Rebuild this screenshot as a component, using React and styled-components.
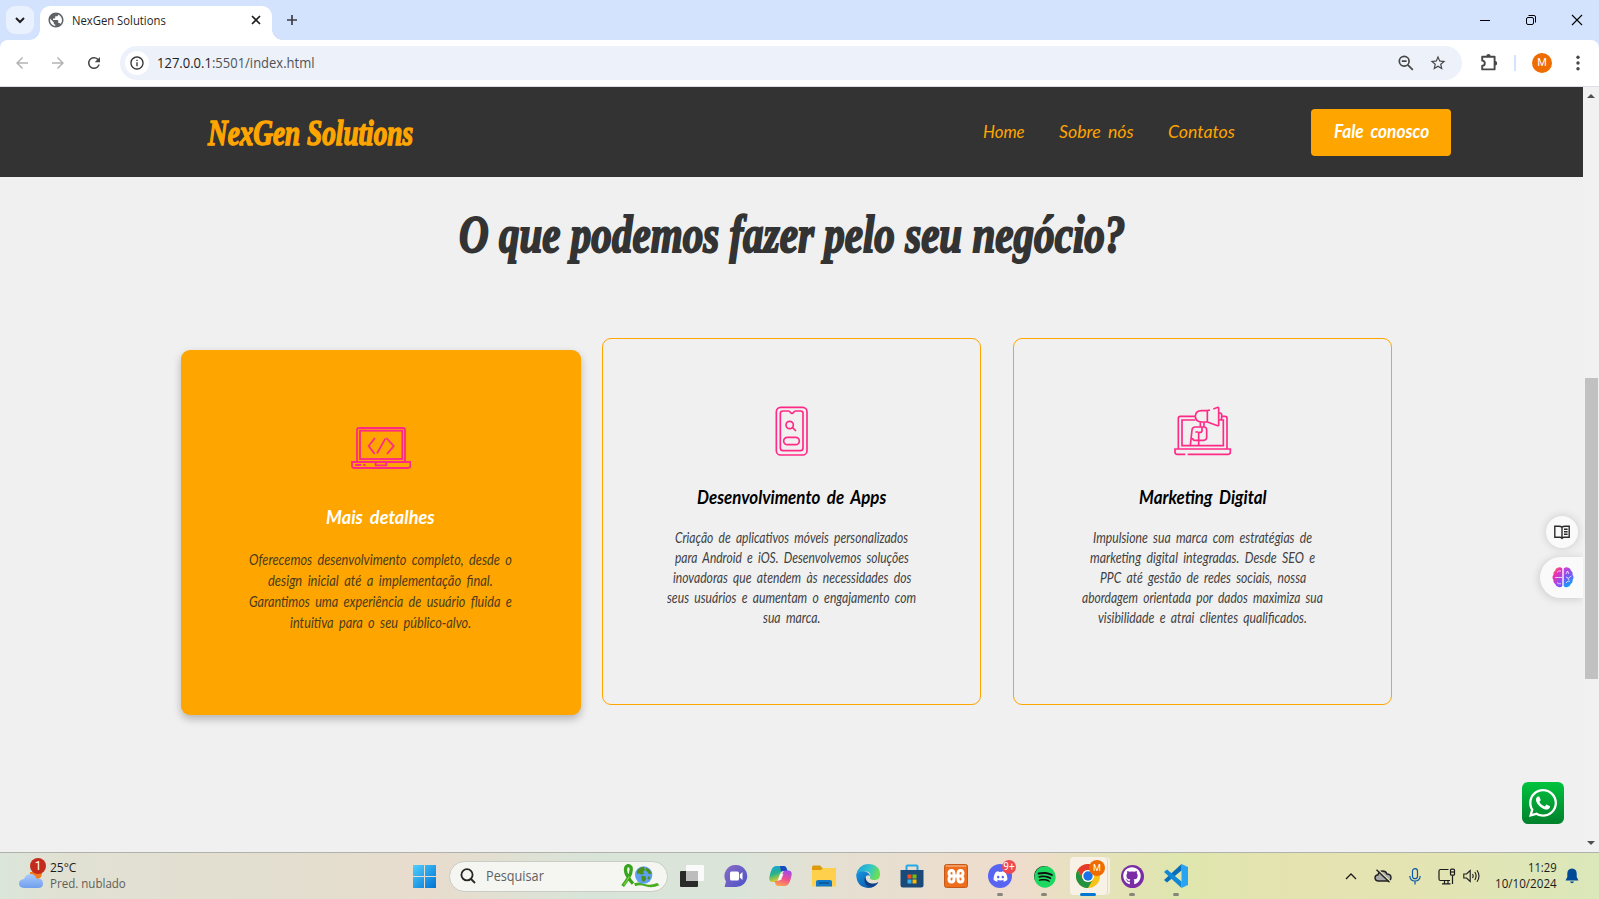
import React, { useLayoutEffect, useRef } from 'react';
import styled, { createGlobalStyle } from 'styled-components';
import { MdArrowBack, MdArrowForward, MdRefresh, MdInfoOutline, MdStarBorder, MdPublic } from 'react-icons/md';
import { FaDiscord, FaSpotify, FaGithub, FaWhatsapp } from 'react-icons/fa';

const ui = `'Open Sans', 'Noto Sans', sans-serif`;
const hand = `Lato, 'Open Sans', sans-serif`;
const display = `'Liberation Serif', serif`;

const Global = createGlobalStyle`
  * { box-sizing: border-box; }
  body { margin: 0; overflow: hidden; background: #f0f0f0; font-family: ${ui}; font-variant-ligatures: none; }
  svg { display: block; flex: none; }
  h1, h2, h3, p { margin: 0; font-weight: inherit; }
`;

/* A single line condensed or widened to a set measure. */
const FitBox = styled.span`
  display: block;
  flex: none;
  width: ${(p) => p.$w}px;
  white-space: nowrap;
`;
const FitInner = styled.span`
  display: inline-block;
  transform-origin: 0 50%;
`;
function Fit({ w, children }) {
  const ref = useRef(null);
  useLayoutEffect(() => {
    ref.current.style.transform = `scaleX(${w / ref.current.offsetWidth})`;
  }, [w, children]);
  return (
    <FitBox $w={w}>
      <FitInner ref={ref}>{children}</FitInner>
    </FitBox>
  );
}

const Screen = styled.div`
  width: 1599px;
  height: 899px;
  display: flex;
  flex-direction: column;
  overflow: hidden;
`;

/* ---------- browser ---------- */
const TabStrip = styled.div`
  height: 40px;
  background: #d3e3fd;
  display: flex;
  padding: 6px 0 0 6px;
`;
const TabSearch = styled.div`
  width: 28px;
  height: 28px;
  border-radius: 9px;
  background: #e9f0fe;
  display: grid;
  place-items: center;
`;
const Tab = styled.div`
  position: relative;
  width: 232px;
  height: 34px;
  margin-left: 6px;
  padding: 0 10px 6px 7px;
  border-radius: 10px 10px 0 0;
  background: #fff;
  display: flex;
  align-items: center;
  color: #1f1f1f;
  font-size: 12px;
  line-height: 28px;
  &::before, &::after {
    content: '';
    position: absolute;
    bottom: 0;
    width: 10px;
    height: 10px;
  }
  &::before { left: -10px; background: radial-gradient(circle at 0 0, transparent 9.5px, #fff 10px); }
  &::after { right: -10px; background: radial-gradient(circle at 100% 0, transparent 9.5px, #fff 10px); }
`;
const TabTitle = styled.div`
  flex: 1;
  margin: 2px 0 0 7px;
`;
const NewTab = styled.div`
  margin: 8px 0 0 14px;
`;
const WindowButtons = styled.div`
  margin: 8px 16px 0 auto;
  display: flex;
  gap: 34px;
`;
const Toolbar = styled.div`
  height: 47px;
  background: #fff;
  border-bottom: 1px solid #dcdfe4;
  border-radius: 8px 8px 0 0;
  display: flex;
  align-items: center;
  padding-left: 13px;
  color: #474747;
`;
const ToolbarBack = styled.div`
  background: #d3e3fd;
`;
const NavIcon = styled.div`
  width: 18px;
  margin-right: 18px;
  color: ${(p) => (p.$off ? '#b4b4b4' : '#474747')};
`;
const Omnibox = styled.div`
  width: 1342px;
  height: 34px;
  margin: 0 17px 0 -1px;
  border-radius: 17px;
  background: #ecf1fa;
  display: flex;
  align-items: center;
  padding: 0 15px 0 5px;
  color: #1f1f1f;
  font-size: 14px;
  line-height: 20px;
`;
const InfoDot = styled.div`
  width: 24px;
  height: 24px;
  border-radius: 50%;
  background: #fff;
  display: grid;
  place-items: center;
  margin-right: 8px;
  color: #333;
`;
const UrlRest = styled.span`
  color: #505356;
`;
const OmniActions = styled.div`
  margin-left: auto;
  display: flex;
  gap: 14px;
  align-items: center;
  color: #474747;
`;
const Divider = styled.div`
  width: 2px;
  height: 16px;
  background: #d3e3fd;
  margin: 0 16px 0 15px;
`;
const Avatar = styled.div`
  width: 20px;
  height: 20px;
  margin-right: 24px;
  border-radius: 50%;
  background: #ef6c00;
  color: #fff;
  font: 11px/20px Roboto, sans-serif;
  text-align: center;
`;

/* ---------- page ---------- */
const Viewport = styled.div`
  height: 765px;
  display: flex;
  background: #f0f0f0;
`;
const Page = styled.div`
  position: relative;
  width: 1583px;
`;
const Header = styled.header`
  height: 90px;
  background: #333;
  display: flex;
  padding: 0 132px 0 208px;
`;
const Logo = styled.h1`
  margin-top: 26px;
  color: #ffa500;
  font: italic bold 36px/40px ${display};
  -webkit-text-stroke: 1.5px #ffa500;
`;
const Nav = styled.nav`
  margin: 33px 0 0 auto;
  display: flex;
  gap: 34px;
  color: #ffa500;
  font: italic 18px/22px ${hand};
  word-spacing: 3px;
`;
const Contact = styled.div`
  width: 140px;
  height: 47px;
  margin: 22px 0 0 76px;
  padding: 11px 0 0 23px;
  border-radius: 4px;
  background: #ffa500;
  color: #fff;
  font: italic bold 18px/22px ${hand};
  word-spacing: 3px;
`;
const Heading = styled.h2`
  margin: 28px 0 0 459px;
  color: #333;
  font: italic bold 52px/60px ${display};
  -webkit-text-stroke: 2px #333;
`;
const Cards = styled.div`
  margin: 73px 0 0 181px;
  display: flex;
  align-items: flex-start;
`;
const Card = styled.article`
  display: flex;
  flex-direction: column;
  align-items: center;
  width: ${(p) => (p.$active ? 399.5 : 379)}px;
  height: ${(p) => (p.$active ? 365.5 : 367)}px;
  margin: ${(p) => (p.$active ? '11.5px 21.5px 0 0' : '0 32px 0 0')};
  padding-top: ${(p) => (p.$active ? 76 : 67)}px;
  border-radius: 9px;
  border: ${(p) => (p.$active ? 'none' : '1px solid #ffa500')};
  background: ${(p) => (p.$active ? '#ffa500' : 'transparent')};
  box-shadow: ${(p) => (p.$active ? '0 4px 8px rgba(0,0,0,.25)' : 'none')};
`;
const CardTitle = styled.h3`
  margin: ${(p) => (p.$active ? '35px 0 20px' : '30px 0 19px')};
  color: ${(p) => (p.$active ? '#fff' : '#000')};
  font: italic bold ${(p) => (p.$active ? '19px/23px' : '18px/22px')} ${hand};
  word-spacing: 3px;
`;
const CardText = styled.p`
  display: flex;
  flex-direction: column;
  align-items: center;
  color: ${(p) => (p.$active ? '#4a3c1c' : '#404040')};
  font: italic ${(p) => (p.$active ? '16px/21px' : '15px/20px')} ${hand};
  word-spacing: 3px;
`;
const Scrollbar = styled.div`
  width: 16px;
  display: flex;
  flex-direction: column;
  align-items: center;
  background: #f1f1f1;
`;
const Arrow = styled.div`
  width: 8px;
  height: 4px;
  background: #505050;
  clip-path: ${(p) => (p.$down ? 'polygon(0 0, 100% 0, 50% 100%)' : 'polygon(50% 0, 100% 100%, 0 100%)')};
  margin: ${(p) => (p.$down ? 'auto 0 7px' : '7px 0 0')};
`;
const Thumb = styled.div`
  width: 13px;
  height: 301px;
  margin-top: 280px;
  background: #c1c1c1;
`;
const ReaderButton = styled.div`
  position: absolute;
  left: 1546px;
  top: 429px;
  width: 32px;
  height: 32px;
  border-radius: 50%;
  background: #fafafa;
  box-shadow: 0 0 10px rgba(0,0,0,.16);
  display: grid;
  place-items: center;
`;
const AssistantButton = styled.div`
  position: absolute;
  left: 1540px;
  top: 470px;
  width: 43px;
  height: 41px;
  border-radius: 21px 0 0 21px;
  background: #fafafa;
  box-shadow: -1px 1px 9px rgba(0,0,0,.16);
  clip-path: inset(-20px 0 -20px -20px);
  padding: 10px 0 0 12px;
`;
const WhatsApp = styled.div`
  position: absolute;
  left: 1522px;
  top: 695px;
  width: 42px;
  height: 42px;
  border-radius: 6px;
  background: linear-gradient(#00c33e, #00802c);
  color: #fff;
  display: grid;
  place-items: center;
`;

/* ---------- taskbar ---------- */
const Taskbar = styled.div`
  height: 47px;
  border-top: 1px solid #b0b3ab;
  background: linear-gradient(90deg, #dbe5da 0, #e1e1d3 60px, #e3decf 300px, #e8dccd 430px, #d9e4d9 590px, #dbe4d9 740px,
    #e6dfd1 850px, #eedccc 1020px, #e5e2b9 1105px, #dfe6ae 1180px, #e5e3b0 1300px, #e3e4b4 1450px, #dbe8ba 1599px);
  display: flex;
  align-items: center;
`;
const Weather = styled.div`
  width: 394px;
  display: flex;
  gap: 5px;
  padding-left: 18px;
  font-size: 12px;
  line-height: 16px;
  color: #1b1b1b;
`;
const Muted = styled.div`
  color: #5d5e59;
`;
const WeatherIcon = styled.div`
  position: relative;
  width: 27px;
  height: 32px;
  padding: 12px 0 0 1px;
`;
const Badge = styled.div`
  position: absolute;
  top: ${(p) => p.$top}px;
  left: ${(p) => p.$left}px;
  width: ${(p) => p.$size}px;
  height: ${(p) => p.$size}px;
  border-radius: 50%;
  background: ${(p) => p.$bg};
  color: #fff;
  text-align: center;
  font-family: Roboto, sans-serif;
  font-size: ${(p) => p.$font}px;
  line-height: ${(p) => p.$size}px;
`;
const Slot = styled.div`
  position: relative;
  width: 44px;
  height: 46px;
  display: grid;
  place-items: center;
`;
const StartSlot = styled(Slot)`
  width: 56px;
  padding-left: 5px;
`;
const Search = styled.div`
  width: 219px;
  height: 31px;
  margin: 0 2px 0 -1px;
  border-radius: 16px;
  border: 1px solid #c9cdc4;
  background: #f5f6f2;
  display: flex;
  align-items: center;
  padding: 0 7px 0 10px;
  font-size: 14px;
  line-height: 20px;
  color: #616161;
  gap: 10px;
`;
const SearchArt = styled.div`
  margin-left: auto;
`;
const Running = styled.div`
  position: absolute;
  bottom: 3px;
  left: ${(p) => (p.$active ? 14 : 19)}px;
  width: ${(p) => (p.$active ? 16 : 6)}px;
  height: 3px;
  border-radius: 2px;
  background: ${(p) => (p.$active ? '#0078d4' : '#85857a')};
`;
const ActiveTile = styled.div`
  width: 37px;
  height: 38px;
  border-radius: 4px;
  background: #f7f1e6;
  box-shadow: 1px 0 0 #e2d9c8, 3px 0 0 #f4efdf;
  display: grid;
  place-items: center;
`;
const Disc = styled.div`
  width: ${(p) => p.$size}px;
  height: ${(p) => p.$size}px;
  border-radius: 50%;
  background: ${(p) => p.$bg};
  color: #fff;
  display: grid;
  place-items: center;
`;
const Tray = styled.div`
  margin-left: auto;
  display: flex;
  align-items: center;
  padding-right: 20px;
`;
const TrayItem = styled.div`
  width: ${(p) => p.$w}px;
  display: grid;
  place-items: center;
`;
const Clock = styled.div`
  width: 77px;
  display: flex;
  flex-direction: column;
  align-items: flex-end;
  margin-right: 8px;
  color: #1b1b1b;
  font-size: 12px;
  line-height: 16px;
`;

/* ---------- drawings ---------- */
const pink = '#ff2a86';

const LaptopCode = () => (
  <svg width="60" height="44" viewBox="513 255 180 132" fill="none" stroke={pink} strokeWidth="5.5">
    <path d="M531 361V267q0-6 6-6h132q6 0 6 6v94" />
    <rect x="540" y="269" width="127" height="85" />
    <path d="M516 363h175v11q0 7-8 7H524q-8 0-8-7zM587 363v10h32v-10M526 372h18M550 372h7" />
    <path d="M585 291l-19 24 18 24M619 291l22 24-20 24M616 293l-25 44" />
  </svg>
);
const PhoneSearch = () => (
  <svg width="60" height="50" viewBox="486 228 180 150" fill="none" stroke={pink} strokeWidth="5">
    <rect x="529" y="232" width="92" height="143" rx="13" />
    <path d="M549 243h16q4 0 6 4 5 7 10 0 2-4 6-4h15q7 0 7 7v104q0 8-8 8h-52q-8 0-8-8V250q0-7 8-7z" />
    <circle cx="569" cy="285" r="11" />
    <path d="M577 292l11 11" />
    <rect x="551" y="322" width="47" height="22" rx="11" />
  </svg>
);
const Megaphone = () => (
  <svg width="60" height="50" viewBox="519 228 180 150" fill="none" stroke={pink} strokeWidth="5">
    <path d="M535 356V265q0-6 6-6h44M666 259h9q6 0 6 6v91" />
    <path d="M586 270h-40v77h124v-77h-7" />
    <path d="M556 373h-24q-7 0-7-7v-9h166v9q0 7-7 7H563" />
    <path d="M622 242h-17q-19 0-19 17t19 17h17zM622 242l8-2M640 237l14-5q2 0 2 3v50q0 3-3 2l-31-11M657 249h3q5 0 5 5v11q0 5-5 5h-3" />
    <path d="M601 277v12M612 277v12M571 346l5-46q1-9 10-9h26q8 0 8 9v22q0 9-9 9h-27q-6 0-6-7M595 306h-9M596 306v40M606 292v11q0 5-10 5" />
  </svg>
);
const ZoomOut = () => (
  <svg width="18" height="18" viewBox="0 0 18 18" fill="none" stroke="#474747" strokeWidth="1.7">
    <circle cx="7.2" cy="7.2" r="4.9" />
    <path d="M10.8 10.8l5 5M4.800 7.200h4.800" />
  </svg>
);
const Puzzle = () => (
  <svg width="20" height="20" viewBox="0 0 20 20">
    <path d="M3.2 3.8h12.4v12.6H3.2v-3.6a2.3 2.3 0 0 0 0-5.2z" fill="none" stroke="#474747" strokeWidth="1.9" strokeLinejoin="round" />
    <path d="M7.3 3.2a2.2 2.2 0 0 1 4.4 0zM16 8a2.2 2.2 0 0 1 0 4.4z" fill="#474747" />
  </svg>
);
const Dots = () => (
  <svg width="4" height="16" viewBox="0 0 4 16" fill="#474747">
    <circle cx="2" cy="2.3" r="1.7" /><circle cx="2" cy="8" r="1.7" /><circle cx="2" cy="13.7" r="1.7" />
  </svg>
);
const Book = () => (
  <svg width="16" height="15" viewBox="0 0 16 15" fill="none" stroke="#2b2b2b" strokeWidth="1.4">
    <path d="M8 2.3Q7 1.3 5 1.3H.8v10.9h5q1.5 0 2.2 1 .7-1 2.2-1h5V1.3H11q-2 0-3 1zM8 2v12M10 4.2h3.6M10 6.7h3.6M10 9.2h3.6" />
  </svg>
);
const Brain = () => (
  <svg width="22" height="21" viewBox="0 0 22 21">
    <defs>
      <linearGradient id="brainL" x1="0" y1="0" x2=".6" y2="1">
        <stop offset="0" stopColor="#ff9b21" /><stop offset=".4" stopColor="#ee2fb5" /><stop offset="1" stopColor="#7a55ff" />
      </linearGradient>
      <linearGradient id="brainR" x1="0" y1="0" x2=".3" y2="1">
        <stop offset="0" stopColor="#d73fd0" /><stop offset=".55" stopColor="#7357f6" /><stop offset="1" stopColor="#12a1ff" />
      </linearGradient>
    </defs>
    <path d="M10.3 1.5Q8-.5 5.5.8 3.4 1.3 3 3.7.8 5 1.6 7.6-.6 10.400 1.500 13q-.5 3 1.700 4Q4 19.800 6.500 20q2.500.8 3.800-1z" fill="url(#brainL)" />
    <path d="M11.700 1.500Q14-.5 16.500.8q2.100.5 2.500 2.900 2.200 1.300 1.400 3.900 2.200 2.800.1 5.400.5 3-1.700 4-.8 2.800-3.300 3-2.500.8-3.800-1z" fill="url(#brainR)" />
    <path d="M3 10.500h7M5 5.500q1-2 4-1.500M5 15.500q1 1.700 4 1.300M14 7l1.500-3L17 7M14 10l2 1 1 2M19.500 9l-3 2M14 16l2-2 2 .3" stroke="#fff" strokeWidth=".9" fill="none" opacity=".8" />
  </svg>
);
const Cloud = () => (
  <svg width="26" height="20" viewBox="0 0 26 20">
    <defs>
      <linearGradient id="cloud" x1="0" y1="0" x2="0" y2="1">
        <stop offset="0" stopColor="#a9caff" /><stop offset="1" stopColor="#6f9fec" />
      </linearGradient>
    </defs>
    <circle cx="17" cy="1.500" r="6" fill="#f47b1c" />
    <path d="M5 16q-5-.5-5-4.500T5 7q2-5 7-5 4 0 5.500 4.500Q24 6 24 11.500q0 4.500-5 4.500z" fill="url(#cloud)" />
  </svg>
);
const WindowsLogo = () => (
  <svg width="23" height="23" viewBox="0 0 23 23">
    <defs>
      <linearGradient id="win" x1="0" y1="0" x2="1" y2="1">
        <stop offset="0" stopColor="#4fd0ff" /><stop offset="1" stopColor="#0072d3" />
      </linearGradient>
    </defs>
    <path d="M0 0h11v11H0zM12 0h11v11H12zM0 12h11v11H0zM12 12h11v11H12z" fill="url(#win)" />
  </svg>
);
const Lens = () => (
  <svg width="16" height="16" viewBox="0 0 16 16" fill="none" stroke="#262626" strokeWidth="1.8">
    <circle cx="7" cy="6.800" r="5.600" /><path d="M11 11l4 4" />
  </svg>
);
const RibbonEarth = () => (
  <svg width="40" height="24" viewBox="660 43 120 72">
    <path d="M668 109q8-10 18-26 10-17 7-30-8-10-15-1-5 14 6 30 8 13 15 20" fill="none" stroke="#38a31c" strokeWidth="10" />
    <path d="M671 106q9-11 17-26" fill="none" stroke="#74cf35" strokeWidth="4" />
    <path d="M702 101q18-6 32 2 16 6 38-3l6 7q-22 10-42 3-17-6-30 0z" fill="#48ac1d" />
    <circle cx="731" cy="76" r="26" fill="#5f9ff0" />
    <path d="M710 66q8-16 22-14l3 10-6 4 4 6-10 3-4-4-6 3zM738 54q14 4 17 18l-8 2-5-8-5-3zM724 78l12 2 3 8-8 10-6-6zM745 80l6 2-3 8-5-3z" fill="#4b8f1d" />
  </svg>
);
const TaskView = () => (
  <svg width="24" height="22" viewBox="0 0 24 22">
    <rect x="6" y="0" width="18" height="16" rx="1" fill="#fafafa" />
    <rect x="0" y="6" width="18" height="16" rx="1" fill="#2a2a2a" />
    <rect x="6" y="6" width="12" height="10" fill="#bdbdbd" />
  </svg>
);
const Chat = () => (
  <svg width="24" height="24" viewBox="0 0 24 24">
    <defs>
      <linearGradient id="chat" x1="0" y1="0" x2="1" y2="1">
        <stop offset="0" stopColor="#8a6cc4" /><stop offset="1" stopColor="#4b52c9" />
      </linearGradient>
    </defs>
    <path d="M12.500 1A11 11 0 1 1 12 23H1.500q-1 0-.7-1L2 17.500A11 11 0 0 1 12.500 1z" fill="url(#chat)" />
    <rect x="6" y="7.500" width="9" height="9" rx="1.500" fill="#fff" />
    <path d="M15.800 10.500L18.500 8v8l-2.700-2.500z" fill="#fff" />
  </svg>
);
const Copilot = () => (
  <svg width="23" height="22" viewBox="0 0 23 22">
    <defs>
      <linearGradient id="copA" x1="0" y1="0" x2=".4" y2="1">
        <stop offset="0" stopColor="#16a3e6" /><stop offset=".5" stopColor="#27b18d" /><stop offset="1" stopColor="#f5d21c" />
      </linearGradient>
      <linearGradient id="copB" x1=".6" y1="0" x2=".3" y2="1">
        <stop offset="0" stopColor="#a34be8" /><stop offset=".5" stopColor="#ef4f8e" /><stop offset="1" stopColor="#ffa24d" />
      </linearGradient>
    </defs>
    <path d="M7 1h8q2 0 2.700 2.500L18.500 6H14q-2 0-2.700 2.300L9 15q-.6 2-2.500 2H4q-4 0-3.700-4Q1.500 6 3.500 3 5 1 7 1z" fill="url(#copA)" />
    <path d="M11 1h4q2 0 2.700 2.500L18.500 6H14q-1.500 0-2 1z" fill="#1b49c2" />
    <path d="M16 21H9q-2 0-2.700-2.500L5.500 16H9q2 0 2.700-2.300L14 7.500Q14.600 5.500 16.500 5.500H19q4 0 3.700 4-1.200 6.500-3.200 9.500-1.300 2-3.500 2z" fill="url(#copB)" />
    <path d="M11 9h3.500l-2.300 6H9z" fill="#fff" opacity=".75" />
  </svg>
);
const Folder = () => (
  <svg width="24" height="22" viewBox="0 0 24 22">
    <path d="M0 2q0-1.500 1.500-1.500H8L10.500 3H24v6H0z" fill="#dc9a0c" />
    <path d="M0 5h9l2-2h12q1 0 1 1v16q0 1.500-1.500 1.500h-21Q0 21.500 0 20z" fill="#ffd04b" />
    <path d="M4 21.500v-4.500q0-2 2-2h12q2 0 2 2v4.500z" fill="#1279c9" /><path d="M7 18h10" stroke="#0a5292" strokeWidth="1.500" />
  </svg>
);
const Edge = () => (
  <svg width="24" height="24" viewBox="0 0 24 24">
    <defs>
      <linearGradient id="edgeA" x1="0" y1="0" x2="1" y2=".3">
        <stop offset="0" stopColor="#199bde" /><stop offset=".6" stopColor="#34c6c9" /><stop offset="1" stopColor="#6bde58" />
      </linearGradient>
      <linearGradient id="edgeB" x1="0" y1="0" x2="1" y2="1">
        <stop offset="0" stopColor="#1797e2" /><stop offset="1" stopColor="#0c4a9b" />
      </linearGradient>
    </defs>
    <path d="M.3 11A12 12 0 0 1 12 0q12 .5 12 10.500 0 5.500-6 5.500-4 0-4-2.500Q15.500 8 10 7.500 3 7 .3 11z" fill="url(#edgeA)" />
    <path d="M.2 10.500Q3.500 6.500 9 7.500q4.500 1 5 4.500-2.500-2-4.500 1-1 7 6 7.500 4 .2 7-2.500Q19 24 12 24 .5 23 .2 10.500z" fill="url(#edgeB)" />
    <path d="M9.500 12.500q-3 6.500 3 10 5 2 10-4.500-3 2-7 1.500-6-1-6-7z" fill="#123f83" />
  </svg>
);
const Store = () => (
  <svg width="24" height="24" viewBox="0 0 24 24">
    <path d="M6.500 7V2.500q0-1 1-1h9q1 0 1 1V7" fill="none" stroke="#21a9e8" strokeWidth="2" />
    <path d="M.5 6h23v15q0 2.500-2.500 2.500H3Q.5 23.500.5 21z" fill="#1b4a78" />
    <path d="M7.500 10.500h4v4h-4z" fill="#f25022" /><path d="M12.500 10.500h4v4h-4z" fill="#7fba00" />
    <path d="M7.500 15.500h4v4h-4z" fill="#35b1f2" /><path d="M12.500 15.500h4v4h-4z" fill="#ffb900" />
  </svg>
);
const Xampp = () => (
  <svg width="24" height="24" viewBox="0 0 24 24">
    <rect x=".5" y=".5" width="23" height="23" rx="2" fill="#ee6d1d" stroke="#c65a1b" />
    <path d="M2 2h20" stroke="#f6a775" strokeWidth="1.500" />
    <path d="M12 12H7.500Q5 12 5 9.300T7.500 6.500 10 9.500V15q0 3-2.500 3T5 15.300 7.500 12M12 12h4.500Q19 12 19 9.300t-2.500-2.800T14 9.500V15q0 3 2.500 3t2.500-2.700T16.500 12" fill="none" stroke="#fff" strokeWidth="3" />
  </svg>
);
const Chrome = () => (
  <svg width="24" height="24" viewBox="0 0 24 24">
    <circle cx="12" cy="12" r="12" fill="#fbc116" />
    <path d="M1.600 6A12 12 0 0 1 22.400 6H12a6 6 0 0 0-5.200 9z" fill="#e33b2e" />
    <path d="M1.600 6A12 12 0 0 0 12 24l5.200-9A6 6 0 0 1 6.800 15z" fill="#229342" />
    <circle cx="12" cy="12" r="6" fill="#fff" /><circle cx="12" cy="12" r="4.700" fill="#1a73e8" />
  </svg>
);
const Code = () => (
  <svg width="24" height="24" viewBox="0 0 24 24">
    <path d="M17.500 0L24 3v18l-6.500 3z" fill="#27a5f2" />
    <path d="M17.500 0v6.500L3 18.500 0 16z" fill="#0a6fb8" />
    <path d="M17.500 24v-6.500L3 5.500 0 8z" fill="#1289d6" />
  </svg>
);
const CloudOff = () => (
  <svg width="18" height="14" viewBox="0 0 18 14">
    <path d="M4 12q-3-.2-3-3.200 0-2.500 3-3Q5 2 8.500 2T13 5q4 .3 4 3.500T13.500 12z" fill="#aaa" stroke="#222" strokeWidth="1.400" />
    <path d="M3.500 0l13 12.500" stroke="#e5e4b4" strokeWidth="1.500" /><path d="M2.500.8l13 12.500" stroke="#222" strokeWidth="1.400" />
  </svg>
);
const Mic = () => (
  <svg width="12" height="17" viewBox="0 0 12 17" fill="none" stroke="#0a59a8" strokeWidth="1.200">
    <rect x="3.500" y=".7" width="5" height="10" rx="2.500" /><path d="M.8 8q.3 5 5.200 5t5.200-5M6 13v3.500" />
  </svg>
);
const Monitor = () => (
  <svg width="18" height="17" viewBox="0 0 18 17" fill="none" stroke="#1b1b1b" strokeWidth="1.200">
    <path d="M10.500 1.500H2.500q-1.500 0-1.500 1.500v8q0 1.500 1.500 1.500H12M4 15.800h8.500M6.500 12.500v3M10 12.500v3M14.500 7.500v8.500" />
    <rect x="12.500" y="1.200" width="4" height="6" rx="1" /><path d="M12.500 4h4" />
  </svg>
);
const Volume = () => (
  <svg width="17" height="14" viewBox="0 0 17 14" fill="none" stroke="#1b1b1b" strokeWidth="1.100">
    <path d="M.8 5h2.700l3.700-3.500v11L3.500 9H.8zM9.500 5q1.300 2 0 4M11.800 3q2.600 4 0 8M14 1.200q4 5.800 0 11.600" />
  </svg>
);
const Bell = () => (
  <svg width="14" height="16" viewBox="0 0 14 16" fill="#004a98">
    <path d="M7 .5q4.700.3 4.700 5V9l1.800 3.500H.5L2.300 9V5.500q0-4.700 4.700-5zM5 13.500h4q-.5 1.700-2 1.700t-2-1.700z" />
  </svg>
);

/* ---------- content ---------- */
const cards = [
  {
    active: true,
    icon: <LaptopCode />,
    title: ['Mais detalhes', 109],
    lines: [
      ['Oferecemos desenvolvimento completo, desde o', 263],
      ['design inicial até a implementação final.', 225],
      ['Garantimos uma experiência de usuário fluida e', 263],
      ['intuitiva para o seu público-alvo.', 181],
    ],
  },
  {
    icon: <PhoneSearch />,
    title: ['Desenvolvimento de Apps', 189],
    lines: [
      ['Criação de aplicativos móveis personalizados', 233],
      ['para Android e iOS. Desenvolvemos soluções', 234],
      ['inovadoras que atendem às necessidades dos', 238],
      ['seus usuários e aumentam o engajamento com', 249],
      ['sua marca.', 57],
    ],
  },
  {
    icon: <Megaphone />,
    title: ['Marketing Digital', 128],
    lines: [
      ['Impulsione sua marca com estratégias de', 219],
      ['marketing digital integradas. Desde SEO e', 225],
      ['PPC até gestão de redes sociais, nossa', 206],
      ['abordagem orientada por dados maximiza sua', 241],
      ['visibilidade e atrai clientes qualificados.', 209],
    ],
  },
];

export default function App() {
  return (
    <Screen>
      <Global />
      <TabStrip>
        <TabSearch>
          <svg width="10" height="7" viewBox="0 0 10 7" fill="none" stroke="#1f1f1f" strokeWidth="2"><path d="M1 1l4 4 4-4" /></svg>
        </TabSearch>
        <Tab>
          <MdPublic size={18} color="#5f6368" />
          <TabTitle><Fit w={94}>NexGen Solutions</Fit></TabTitle>
          <svg width="12" height="10" viewBox="0 0 12 10" stroke="#1f1f1f" strokeWidth="1.700"><path d="M2 1l8 8M10 1L2 9" /></svg>
        </Tab>
        <NewTab>
          <svg width="12" height="12" viewBox="0 0 12 12" stroke="#3c3f44" strokeWidth="1.700"><path d="M6 1v10M1 6h10" /></svg>
        </NewTab>
        <WindowButtons>
          <svg width="12" height="12" viewBox="0 0 12 12" stroke="#000"><path d="M1 6.500h10" /></svg>
          <svg width="12" height="12" viewBox="0 0 12 12" fill="none" stroke="#000"><rect x="1.500" y="3.500" width="7" height="7" rx="1.500" /><path d="M3.500 1.500H9q1.500 0 1.500 1.500v5.500" /></svg>
          <svg width="12" height="12" viewBox="0 0 12 12" stroke="#000" strokeWidth="1.100"><path d="M1 1l10 10M11 1L1 11" /></svg>
        </WindowButtons>
      </TabStrip>
      <ToolbarBack>
        <Toolbar>
          <NavIcon $off><MdArrowBack size={18} /></NavIcon>
          <NavIcon $off><MdArrowForward size={18} /></NavIcon>
          <NavIcon><MdRefresh size={18} /></NavIcon>
          <Omnibox>
            <InfoDot><MdInfoOutline size={16} /></InfoDot>
            <Fit w={158}>127.0.0.1<UrlRest>:5501/index.html</UrlRest></Fit>
            <OmniActions><ZoomOut /><MdStarBorder size={18} /></OmniActions>
          </Omnibox>
          <Puzzle />
          <Divider />
          <Avatar>M</Avatar>
          <Dots />
        </Toolbar>
      </ToolbarBack>

      <Viewport>
        <Page>
          <Header>
            <Logo><Fit w={205}>NexGen Solutions</Fit></Logo>
            <Nav>
              <Fit w={42}>Home</Fit>
              <Fit w={75}>Sobre nós</Fit>
              <Fit w={67}>Contatos</Fit>
            </Nav>
            <Contact><Fit w={95}>Fale conosco</Fit></Contact>
          </Header>
          <Heading><Fit w={666}>O que podemos fazer pelo seu negócio?</Fit></Heading>
          <Cards>
            {cards.map((c) => (
              <Card key={c.title[0]} $active={c.active}>
                {c.icon}
                <CardTitle $active={c.active}><Fit w={c.title[1]}>{c.title[0]}</Fit></CardTitle>
                <CardText $active={c.active}>
                  {c.lines.map(([text, w]) => <Fit key={text} w={w}>{text}</Fit>)}
                </CardText>
              </Card>
            ))}
          </Cards>
          <ReaderButton><Book /></ReaderButton>
          <AssistantButton><Brain /></AssistantButton>
          <WhatsApp><FaWhatsapp size={32} /></WhatsApp>
        </Page>
        <Scrollbar>
          <Arrow />
          <Thumb />
          <Arrow $down />
        </Scrollbar>
      </Viewport>

      <Taskbar>
        <Weather>
          <WeatherIcon>
            <Cloud />
            <Badge $top={-2} $left={12} $size={16} $bg="#c42b1c" $font={12}>1</Badge>
          </WeatherIcon>
          <div>
            <Fit w={26}>25°C</Fit>
            <Muted><Fit w={76}>Pred. nublado</Fit></Muted>
          </div>
        </Weather>
        <StartSlot><WindowsLogo /></StartSlot>
        <Search>
          <Lens />
          <Fit w={58}>Pesquisar</Fit>
          <SearchArt><RibbonEarth /></SearchArt>
        </Search>
        <Slot><TaskView /></Slot>
        <Slot><Chat /></Slot>
        <Slot><Copilot /></Slot>
        <Slot><Folder /></Slot>
        <Slot><Edge /></Slot>
        <Slot><Store /></Slot>
        <Slot><Xampp /></Slot>
        <Slot>
          <Disc $size={24} $bg="#5865f2"><FaDiscord size={15} /></Disc>
          <Badge $top={7} $left={24} $size={14} $bg="#f0484e" $font={10}>9+</Badge>
          <Running />
        </Slot>
        <Slot>
          <Disc $size={20} $bg="#111"><FaSpotify size={22} color="#1ed760" /></Disc>
          <Running />
        </Slot>
        <Slot>
          <ActiveTile><Chrome /></ActiveTile>
          <Badge $top={7} $left={23} $size={16} $bg="#ef6c00" $font={9}>M</Badge>
          <Running $active />
        </Slot>
        <Slot>
          <Disc $size={23} $bg="#7a2da5"><FaGithub size={18} /></Disc>
          <Running />
        </Slot>
        <Slot><Code /><Running /></Slot>
        <Tray>
          <TrayItem $w={32}>
            <svg width="12" height="7" viewBox="0 0 12 7" fill="none" stroke="#1b1b1b" strokeWidth="1.300"><path d="M1 6l5-5 5 5" /></svg>
          </TrayItem>
          <TrayItem $w={32}><CloudOff /></TrayItem>
          <TrayItem $w={32}><Mic /></TrayItem>
          <TrayItem $w={32}><Monitor /></TrayItem>
          <TrayItem $w={17}><Volume /></TrayItem>
          <Clock>
            <Fit w={29}>11:29</Fit>
            <Fit w={62}>10/10/2024</Fit>
          </Clock>
          <Bell />
        </Tray>
      </Taskbar>
    </Screen>
  );
}
